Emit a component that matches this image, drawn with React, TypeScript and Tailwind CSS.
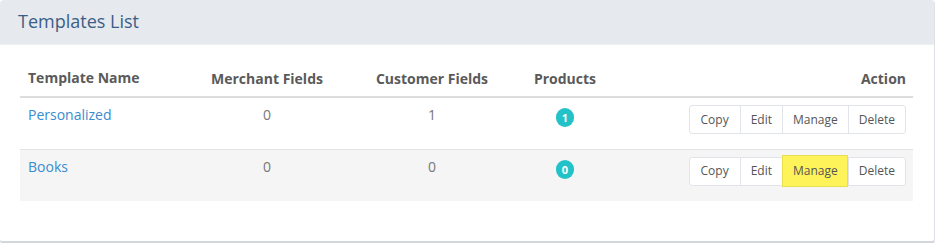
const rows = [
  { name: 'Personalized', merchant: 0, customer: 1, products: 1, striped: false, highlight: false },
  { name: 'Books', merchant: 0, customer: 0, products: 0, striped: true, highlight: true },
];

const actions = ['Copy', 'Edit', 'Manage', 'Delete'];

export default function App() {
  return (
    <div className="w-[936px] h-[243px] bg-white" style={{ fontFamily: '"Open Sans", "Liberation Sans", sans-serif' }}>
      <div className="w-[935px] rounded-[4px] overflow-hidden bg-white border-r border-r-[#dde1e5] border-b-[3px] border-b-[#d3d7dc]">
        {/* Panel heading */}
        <div className="h-[45px] bg-[#e6e9ed] border-b border-[#eef0f3] pl-[18px] flex items-center">
          <h3 className="text-[18px] text-[#3b5e86] leading-none pb-[3px]">Templates List</h3>
        </div>

        {/* Table */}
        <div className="px-[20px] pt-[15px] pb-[40px]">
          <table className="w-[893px] border-collapse table-fixed text-[14px]">
            <colgroup>
              <col className="w-[170px]" />
              <col className="w-[154px]" />
              <col className="w-[176px]" />
              <col className="w-[90px]" />
              <col className="w-[303px]" />
            </colgroup>
            <thead>
              <tr className="border-b-2 border-[#dddddd] text-[#5a5a5a]">
                <th className="h-[37px] px-2 text-left font-bold leading-5 align-middle">Template Name</th>
                <th className="px-2 text-center font-bold">Merchant Fields</th>
                <th className="px-2 text-center font-bold">Customer Fields</th>
                <th className="px-2 text-center font-bold">Products</th>
                <th className="pl-2 pr-[7px] text-right font-bold">Action</th>
              </tr>
            </thead>
            <tbody>
              {rows.map((row) => (
                <tr key={row.name} className={`border-t border-[#e3e3e3] ${row.striped ? 'bg-[#f5f5f5]' : 'bg-white'}`}>
                  <td className="h-[52px] px-2 pt-[7px] align-top leading-5">
                    <a href="#" className="text-[#3a8ccf]">{row.name}</a>
                  </td>
                  <td className="px-2 pt-[7px] align-top text-center text-[#777] leading-5">{row.merchant}</td>
                  <td className="px-2 pt-[7px] align-top text-center text-[#777] leading-5">{row.customer}</td>
                  <td className="px-2 pt-[8px] align-top text-center">
                    <span className="inline-flex items-center justify-center min-w-[18px] h-[19px] px-[5px] rounded-[9px] bg-[#22c2c8] text-white text-[11px] font-bold leading-none">
                      {row.products}
                    </span>
                  </td>
                  <td className="pl-2 pr-[7px] pt-[7px] align-top text-right">
                    <div className="inline-flex rounded-[3px] border border-[#e1e5e9] bg-white">
                      {actions.map((a, i) => (
                        <button
                          key={a}
                          className={`relative h-[27px] text-[12px] text-[#555] leading-none ${i === 0 ? 'px-[11px]' : 'px-[10px] border-l border-[#e1e5e9]'}`}
                        >
                          {row.highlight && a === 'Manage' && (
                            <span className="absolute -top-[3px] -bottom-[2px] -left-px right-0 bg-[#fff35a] border border-[#e8de4e]" />
                          )}
                          <span className="relative">{a}</span>
                        </button>
                      ))}
                    </div>
                  </td>
                </tr>
              ))}
            </tbody>
          </table>
        </div>
      </div>
    </div>
  );
}
